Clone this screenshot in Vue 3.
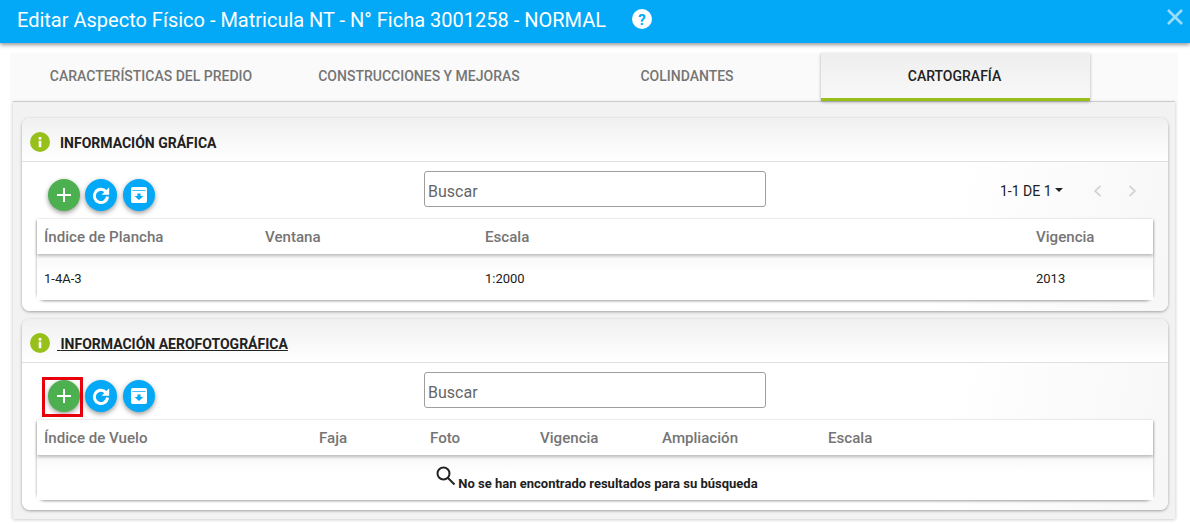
<script setup>
const cards = [
  {
    title: 'INFORMACIÓN GRÁFICA',
    pager: true,
    cols: [['Índice de Plancha', 221], ['Ventana', 220], ['Escala', 551], ['Vigencia', 117]],
    row: ['1-4A-3', '', '1:2000', '2013'],
  },
  {
    title: 'INFORMACIÓN AEROFOTOGRÁFICA',
    marked: true,
    cols: [['Índice de Vuelo', 275], ['Faja', 111], ['Foto', 110], ['Vigencia', 122], ['Ampliación', 166], ['Escala', 325]],
  },
]
const tabs = ['CARACTERÍSTICAS DEL PREDIO', 'CONSTRUCCIONES Y MEJORAS', 'COLINDANTES', 'CARTOGRAFÍA']
</script>

<template>
  <div class="page">
    <header class="bar">
      <h1>Editar Aspecto Físico - Matricula NT - N° Ficha 3001258 - NORMAL</h1>
      <svg class="help" viewBox="0 0 20 20" width="20" height="20">
        <circle cx="10" cy="10" r="10" fill="#fff" />
        <text x="10" y="15.5" text-anchor="middle" class="help-q">?</text>
      </svg>
      <svg class="close" viewBox="0 0 18 18" width="18" height="18">
        <path d="M2 2 16 16M16 2 2 16" stroke="#9bdcfb" stroke-width="2.6" fill="none" />
      </svg>
    </header>

    <div class="shell">
      <nav class="tabs">
        <div v-for="(t, i) in tabs" :key="t" class="tab" :class="{ active: i === 3 }">{{ t }}</div>
      </nav>
      <main class="content">
        <section v-for="c in cards" :key="c.title" class="card" :class="{ second: c.marked }">
          <div class="card-head">
            <svg viewBox="0 0 20 20" width="20" height="20">
              <circle cx="10" cy="10" r="10" fill="#97c11a" />
              <rect x="8.7" y="5" width="2.6" height="2.6" fill="#fff" />
              <rect x="8.7" y="8.8" width="2.6" height="6.4" fill="#fff" />
            </svg>
            <h2 :class="{ underlined: c.marked }"><span v-if="c.marked">&nbsp;</span>{{ c.title }}</h2>
          </div>
          <div class="card-body">
            <div class="toolbar">
              <div class="actions">
                <button class="fab green" :class="{ flagged: c.marked }">
                  <svg viewBox="0 0 18 18" width="18" height="18">
                    <path d="M9 2v14M2 9h14" stroke="#fff" stroke-width="2" fill="none" />
                  </svg>
                </button>
                <button class="fab blue">
                  <svg viewBox="0 0 24 24" width="24" height="24">
                    <path d="M16.9 8.6A6.6 6.6 0 1 0 18.5 13.5" stroke="#fff" stroke-width="3" fill="none" />
                    <path d="M20.2 4.2v7.6h-7.6z" fill="#fff" />
                  </svg>
                </button>
                <button class="fab blue">
                  <svg viewBox="0 0 18 18" width="18" height="18">
                    <path fill="#fff" d="M2.8 1h12.4A1.8 1.8 0 0 1 17 2.8v12.4a1.8 1.8 0 0 1-1.8 1.8H2.8A1.8 1.8 0 0 1 1 15.2V2.8A1.8 1.8 0 0 1 2.8 1z" />
                    <path fill="#03a9f7" d="M2.4 4.2h13.2v.9H2.4zM7.4 7.4h3.2v2.6h2.8L9 14 4.6 10h2.8z" />
                  </svg>
                </button>
              </div>
              <div class="search">Buscar</div>
              <div v-if="c.pager" class="pager">
                <span class="count">1-1 DE 1</span>
                <span class="caret"></span>
                <svg class="arrow first" viewBox="0 0 10 14" width="10" height="14">
                  <path d="M8.5 2 3 7l5.5 5" stroke="#d4d4d4" stroke-width="1.7" fill="none" />
                </svg>
                <svg class="arrow" viewBox="0 0 10 14" width="10" height="14">
                  <path d="M1.5 2 7 7l-5.5 5" stroke="#d4d4d4" stroke-width="1.7" fill="none" />
                </svg>
              </div>
            </div>
            <div class="table">
              <div class="thead">
                <div v-for="col in c.cols" :key="col[0]" class="th" :style="{ width: col[1] + 'px' }">{{ col[0] }}</div>
              </div>
              <div v-if="c.row" class="tr">
                <div v-for="(v, i) in c.row" :key="i" class="td" :style="{ width: c.cols[i][1] + 'px' }">{{ v }}</div>
              </div>
              <div v-else class="empty">
                <svg viewBox="0 0 24 24" width="24" height="24">
                  <circle cx="9.5" cy="9.5" r="6" stroke="#222" stroke-width="2" fill="none" />
                  <path d="M14 14l6.5 6.5" stroke="#222" stroke-width="2" fill="none" />
                </svg>
                <strong>No se han encontrado resultados para su búsqueda</strong>
              </div>
            </div>
          </div>
        </section>
      </main>
    </div>
  </div>
</template>

<style>
html, body { margin: 0; background: #fff; }
</style>

<style scoped>
.page { width: 1190px; height: 524px; overflow: hidden; font-family: Roboto, sans-serif; background: #fff; }
.bar {
  height: 43px; box-sizing: border-box; padding: 0 0 3px 17px; background: #03a9f7; display: flex; align-items: center;
  box-shadow: 0 2px 4px rgba(0,0,0,.4); position: relative; z-index: 2;
}
.bar h1 { margin: 0; font-size: 20px; font-weight: 400; color: #fff; white-space: nowrap; }
.help { margin-left: 26px; margin-top: -3px; }
.help-q { font: 700 15px Roboto, sans-serif; fill: #03a9f7; }
.close { margin-left: auto; margin-right: 6px; margin-top: -6px; }
.shell { margin: 10px 12px 0 10px; background: #fafafa; padding: 0 3px; }
.tabs { display: flex; height: 48px; padding-left: 4px; }
.tab {
  width: 268px; display: flex; align-items: center; justify-content: center;
  font-size: 14px; font-weight: 500; color: #757575; padding-bottom: 3px; box-sizing: border-box;
}
.tab.active {
  width: 269px; color: #212121; background: linear-gradient(#eee, #f8f8f8); padding: 1px 2px 0 0;
  border-bottom: 3px solid #97c11a; box-shadow: 0 1px 3px rgba(0,0,0,.3);
}
.content {
  background: #f2f2f2; border-top: 1px solid #ccc; padding: 16px 7px 6px 9px;
  height: 418px; box-sizing: border-box; box-shadow: 0 1px 3px rgba(0,0,0,.2);
}
.card {
  background: #fff; border-radius: 8px; box-shadow: 0 1px 3px rgba(0,0,0,.35);
  height: 193px; margin-bottom: 8px; overflow: hidden;
}
.card.second { height: 191px; margin-bottom: 0; }
.card-head {
  height: 44px; box-sizing: border-box; padding: 5px 0 0 8px; display: flex; align-items: center;
  background: linear-gradient(#f0f0f0, #fff); border-bottom: 1px solid #e0e0e0;
}
.card-head h2 { margin: 2px 0 0 10px; font-size: 14px; font-weight: 700; color: #212121; }
.card-head h2.underlined { text-decoration: underline; margin-left: 7px; }
.card-body { padding: 0 15px; background: linear-gradient(100deg, #fff 80%, #f7f7f7); height: 149px; }
.toolbar { height: 57px; display: flex; align-items: center; position: relative; }
.actions { display: flex; gap: 5px; margin-left: 11px; width: 376px; margin-top: 9px; }
.fab {
  width: 32px; height: 32px; border: 0; border-radius: 50%; padding: 0; display: flex;
  align-items: center; justify-content: center; box-shadow: 0 2px 5px rgba(0,0,0,.4); position: relative;
}
.fab + .fab + .fab { margin-left: 1px; }
.green { background: #4caf50; }
.blue { background: #03a9f7; }
.flagged::after {
  content: ''; position: absolute; left: -6px; top: -3px; width: 41px; height: 40px;
  box-sizing: border-box; border: 3px solid #e8000d;
}
.search {
  width: 342px; height: 36px; box-sizing: border-box; border: 1px solid #9e9e9e; border-radius: 3px;
  font-size: 16px; color: #666; display: flex; align-items: center; padding: 4px 0 0 3px; background: #fff;
  margin-top: -3px;
}
.pager { display: flex; align-items: center; margin-left: 234px; margin-top: 1px; font-size: 14px; color: #212121; font-weight: 400; }
.caret { width: 0; height: 0; border: 4px solid transparent; border-top-color: #212121; border-bottom: 0; margin-left: 3px; margin-top: -2px; }
.arrow.first { margin-left: 29px; margin-right: 26px; }
.table {
  background: #fff; border-radius: 0 0 8px 8px; box-shadow: 0 1px 3px rgba(0,0,0,.4);
}
.thead { height: 35px; display: flex; align-items: center; padding: 1px 0 0 7px; box-sizing: border-box; box-shadow: 0 2px 3px rgba(0,0,0,.25); position: relative; }
.th { font-size: 15.1px; font-weight: 500; color: #757575; flex: none; }
.tr { height: 46px; box-sizing: border-box; padding: 3px 0 0 7px; display: flex; align-items: center; background: linear-gradient(#f8f8f8 0, #fff 40%); }
.td { font-size: 13px; color: #212121; flex: none; }
.empty { height: 45px; display: flex; justify-content: center; align-items: flex-start; background: linear-gradient(#f8f8f8 0, #fff 40%); }
.empty svg { margin: 9px 0 0 2px; }
.empty strong { font-size: 13px; font-weight: 700; color: #212121; margin-top: 21px; }
</style>
